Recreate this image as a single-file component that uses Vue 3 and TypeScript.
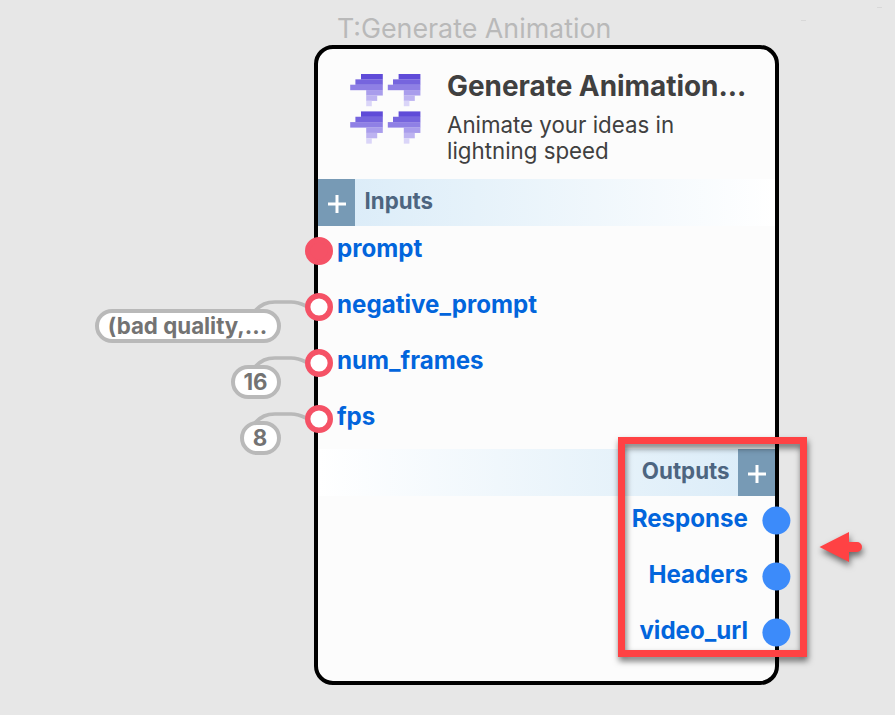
<script setup lang="ts">
interface InputPort {
  name: string
  filled: boolean
  value?: string
  size?: string
}

const inputs: InputPort[] = [
  { name: 'prompt', filled: true },
  { name: 'negative_prompt', filled: false, value: '(bad quality,...', size: 'wide' },
  { name: 'num_frames', filled: false, value: '16', size: 'medium' },
  { name: 'fps', filled: false, value: '8', size: 'small' },
]
const outputs: string[] = ['Response', 'Headers', 'video_url']

const birds: [number, number][] = [[0, 0], [37.6, 0], [0, 37.4], [37.6, 37.4]]
const bars = [
  { x: 11, w: 21.8, c: '#5f4bd8' },
  { x: 5.4, w: 27.4, c: '#7665de' },
  { x: 0.2, w: 32.6, c: '#8f80e5' },
  { x: 16.2, w: 16.6, c: '#a99dec' },
  { x: 16.2, w: 11, c: '#bdb3f1' },
  { x: 16.2, w: 5.6, c: '#dad5f8' },
]
</script>

<template>
  <main class="canvas">
    <div class="node-title"><span>T:Generate Animation</span></div>
    <section class="node">
      <header class="head">
        <svg class="logo" width="72" height="72" viewBox="0 0 72 72">
          <g v-for="(b, i) in birds" :key="i" :transform="`translate(${b[0]} ${b[1]})`">
            <rect v-for="(r, j) in bars" :key="j" :x="r.x" :y="j * 5.35" :width="r.w" height="5.5" :fill="r.c" />
          </g>
        </svg>
        <div class="head-text">
          <h1><span>Generate Animation...</span></h1>
          <p><span>Animate your ideas in</span><br /><span>lightning speed</span></p>
        </div>
      </header>

      <div class="band band-in">
        <button class="add" aria-label="Add input">
          <svg width="20" height="20" viewBox="0 0 20 20"><path d="M10 1v18M1 10h18" stroke="#fff" stroke-width="3" /></svg>
        </button>
        <span class="band-label">Inputs</span>
      </div>
      <div v-for="p in inputs" :key="p.name" class="row">
        <template v-if="p.value">
          <svg class="wire" width="64" height="20" viewBox="0 0 64 20">
            <path d="M5 14C12 6 18 4 26 4H42C48 4 51 5 57 8" fill="none" stroke="#b9b9b9" stroke-width="3.7" />
          </svg>
          <div class="chip" :class="p.size"><span>{{ p.value }}</span></div>
        </template>
        <svg class="port in" width="30" height="30" viewBox="0 0 30 30">
          <circle cx="15" cy="15" r="11.3" :fill="p.filled ? '#f55266' : '#fff'" stroke="#f55266" stroke-width="5.4" />
        </svg>
        <span class="label">{{ p.name }}</span>
      </div>

      <div class="band band-out">
        <span class="band-label">Outputs</span>
        <button class="add" aria-label="Add output">
          <svg width="20" height="20" viewBox="0 0 20 20"><path d="M10 1v18M1 10h18" stroke="#fff" stroke-width="3" /></svg>
        </button>
      </div>
      <div v-for="o in outputs" :key="o" class="row row-out">
        <span class="label">{{ o }}</span>
        <svg class="port out" width="30" height="30" viewBox="0 0 30 30">
          <circle cx="15.400" cy="14.600" r="14" fill="#3c8bfa" />
        </svg>
      </div>
    </section>

    <div class="highlight"></div>
    <svg class="arrow" width="60" height="50" viewBox="0 0 60 50">
      <path d="M4.500 22L34 7V17H42A5 5 0 0 1 42 27H34V37Z" fill="#ff4244" />
    </svg>
    <i class="speck speck-a"></i>
    <i class="speck speck-b"></i>
  </main>
</template>

<style>
body {
  background: #e7e7e7;
}
</style>

<style scoped>
.canvas {
  position: relative;
  width: 895px;
  height: 715px;
  overflow: hidden;
  box-sizing: border-box;
  padding: 12px 0 0 314px;
  background: #e7e7e7;
  font-family: Inter, "Liberation Sans", sans-serif;
}
.node-title {
  height: 33px;
  padding-left: 23px;
  font-size: 26.800px;
  line-height: 33px;
  color: #b9b9b9;
  white-space: nowrap;
}
.node {
  box-sizing: border-box;
  width: 465px;
  height: 640px;
  border: 4px solid #000;
  border-radius: 19px;
  background: #fcfcfc;
}
.head {
  display: flex;
  box-sizing: border-box;
  height: 130px;
  padding: 24.500px 0 0 32px;
}
.logo {
  flex: none;
}
.head-text {
  padding-left: 25px;
  color: #404040;
  white-space: nowrap;
}
h1 {
  margin: -4.500px 0 0;
  font-size: 27.900px;
  line-height: 34px;
  font-weight: 700;
}
p {
  margin: 9px 0 0;
  font-size: 22.300px;
  line-height: 26px;
}
.band {
  display: flex;
  height: 47px;
  font-size: 22.300px;
  font-weight: 700;
  line-height: 44px;
  color: #4d6580;
}
.band-in {
  background: linear-gradient(90deg, #d9ebf8, #e6f2fa 35%, #fff);
}
.band-out {
  justify-content: flex-end;
  margin-top: -1px;
  background: linear-gradient(270deg, #d9ebf8, #e6f2fa 35%, #fff);
}
.band-in .band-label {
  padding-left: 9.500px;
}
.band-out .band-label {
  padding-right: 8.500px;
}
.add {
  display: flex;
  align-items: center;
  justify-content: center;
  width: 37px;
  height: 100%;
  padding: 3px 0 0;
  border: 0;
  background: #779ab5;
}
.row {
  position: relative;
  box-sizing: border-box;
  height: 56px;
  padding-left: 19px;
  font-size: 24.130px;
  font-weight: 700;
  line-height: 45px;
  color: #0265dc;
  white-space: nowrap;
}
.row-out {
  padding: 0 27px 0 0;
  text-align: right;
}
.port {
  position: absolute;
}
.port.in {
  left: -14px;
  top: 10px;
}
.port.out {
  right: -16px;
  top: 10px;
}
.wire {
  position: absolute;
  left: -69.500px;
  top: 16px;
}
.chip {
  position: absolute;
  right: 494.500px;
  top: 27px;
  display: flex;
  justify-content: center;
  box-sizing: border-box;
  height: 34px;
  border: 4px solid #b9b9b9;
  border-radius: 17px;
  background: #fff;
  font-size: 22.300px;
  line-height: 26px;
  color: #737373;
}
.wide { width: 186px; }
.medium { width: 50px; }
.small { width: 41px; }
.highlight {
  position: absolute;
  left: 618px;
  top: 437px;
  box-sizing: border-box;
  width: 189px;
  height: 220px;
  border: 7px solid #ff4244;
  filter: drop-shadow(1px 4px 3px rgba(0, 0, 0, 0.55));
}
.arrow {
  position: absolute;
  left: 815px;
  top: 525px;
  filter: drop-shadow(1px 4px 3px rgba(0, 0, 0, 0.55));
}
.speck {
  position: absolute;
  width: 5px;
  height: 1px;
  background: #d8d8d8;
}
.speck-a { left: 801px; top: 20px; }
.speck-b { left: 877px; top: 7px; }
</style>
